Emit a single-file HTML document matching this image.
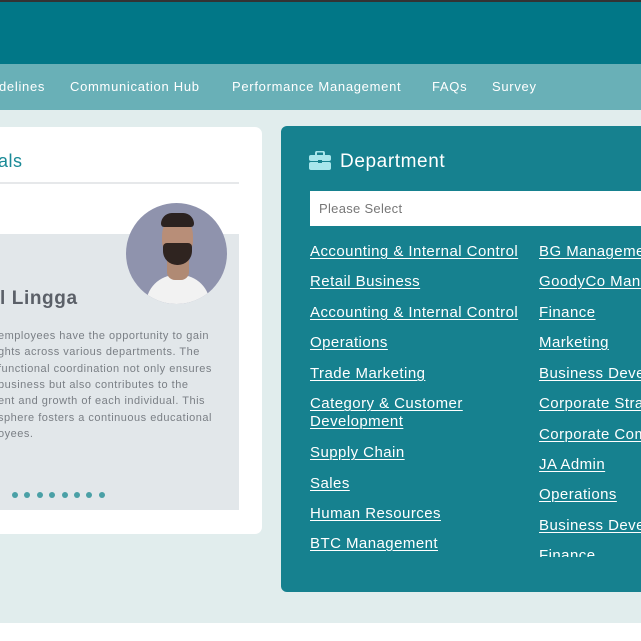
<!DOCTYPE html>
<html><head><meta charset="utf-8"><style>
*{margin:0;padding:0;box-sizing:border-box}
body{width:641px;height:641px;overflow:hidden;background:#fff;font-family:"Liberation Sans",sans-serif;position:relative}
.a{position:absolute;white-space:nowrap}
.nav{color:#fff;font-size:13px;letter-spacing:.7px;top:79px}
.l{position:absolute;color:#fff;font-size:15px;text-decoration:underline;text-decoration-thickness:1px;text-underline-offset:2px;white-space:nowrap;letter-spacing:.45px}
.p{position:absolute;left:-2px;font-size:11px;color:#7a7f85;letter-spacing:.5px;white-space:nowrap}
</style></head><body>
<div class="a" style="left:0;top:0;width:641px;height:623px;background:#e1eded"></div>
<div class="a" style="left:0;top:0;width:641px;height:2px;background:#333"></div>
<div class="a" style="left:0;top:2px;width:641px;height:62px;background:#017787"></div>
<div class="a" style="left:0;top:64px;width:641px;height:46px;background:#69b0b7"></div>
<div class="a nav" style="left:-1px">delines</div>
<div class="a nav" style="left:70px">Communication Hub</div>
<div class="a nav" style="left:232px">Performance Management</div>
<div class="a nav" style="left:432px">FAQs</div>
<div class="a nav" style="left:492px">Survey</div>

<div class="a" style="left:-10px;top:127px;width:272px;height:407px;background:#fff;border-radius:7px"></div>
<div class="a" style="left:-2px;top:151px;font-size:18px;color:#1a8a97;letter-spacing:.5px">als</div>
<div class="a" style="left:0;top:182px;width:239px;height:2px;background:#e6e8ea"></div>
<div class="a" style="left:0;top:234px;width:239px;height:276px;background:#e2e7ea"></div>
<div class="a" style="left:126px;top:203px;width:101px;height:101px;border-radius:50%;background:#8f93ad;overflow:hidden">
 <div class="a" style="left:20px;top:72px;width:64px;height:40px;border-radius:30px 30px 0 0;background:#f2f2f2"></div>
 <div class="a" style="left:41px;top:45px;width:22px;height:32px;background:#b08a74;border-radius:8px"></div>
 <div class="a" style="left:36px;top:14px;width:31px;height:42px;border-radius:45%;background:#b88e78"></div>
 <div class="a" style="left:35px;top:10px;width:33px;height:14px;border-radius:14px 14px 4px 4px;background:#2b2220"></div>
 <div class="a" style="left:37px;top:40px;width:29px;height:22px;border-radius:4px 4px 14px 14px;background:#2f2420"></div>
</div>
<div class="a" style="left:0px;top:288px;font-size:19px;font-weight:bold;color:#5b6068;letter-spacing:.6px">l Lingga</div>
<div class="p" style="top:330px">employees have the opportunity to gain</div>
<div class="p" style="top:346px">ghts across various departments. The</div>
<div class="p" style="top:363px">functional coordination not only ensures</div>
<div class="p" style="top:379px">business but also contributes to the</div>
<div class="p" style="top:395px">ent and growth of each individual. This</div>
<div class="p" style="top:412px">sphere fosters a continuous educational</div>
<div class="p" style="top:428px">oyees.</div>
<div class="a" style="left:12px;top:492px;font-size:0">
 <span style="display:inline-block;width:6px;height:6px;border-radius:50%;background:#4aa0a6;margin-right:6.4px"></span><span style="display:inline-block;width:6px;height:6px;border-radius:50%;background:#4aa0a6;margin-right:6.4px"></span><span style="display:inline-block;width:6px;height:6px;border-radius:50%;background:#4aa0a6;margin-right:6.4px"></span><span style="display:inline-block;width:6px;height:6px;border-radius:50%;background:#4aa0a6;margin-right:6.4px"></span><span style="display:inline-block;width:6px;height:6px;border-radius:50%;background:#4aa0a6;margin-right:6.4px"></span><span style="display:inline-block;width:6px;height:6px;border-radius:50%;background:#4aa0a6;margin-right:6.4px"></span><span style="display:inline-block;width:6px;height:6px;border-radius:50%;background:#4aa0a6;margin-right:6.4px"></span><span style="display:inline-block;width:6px;height:6px;border-radius:50%;background:#4aa0a6"></span>
</div>

<div class="a" style="left:281px;top:126px;width:380px;height:466px;background:#16818f;border-radius:6px"></div>
<svg class="a" style="left:309px;top:151px" width="22" height="19" viewBox="0 0 22 19">
 <path d="M7 4V2a1.5 1.5 0 0 1 1.5-1.5h5A1.5 1.5 0 0 1 15 2v2" fill="none" stroke="#a8e6ec" stroke-width="2"/>
 <rect x="0" y="4" width="22" height="6" rx="2" fill="#a8e6ec"/>
 <rect x="0" y="11" width="22" height="8" rx="2" fill="#a8e6ec"/>
 <rect x="9" y="9" width="4" height="3" fill="#16818f"/>
</svg>
<div class="a" style="left:340px;top:151px;font-size:19px;color:#fff;letter-spacing:.6px">Department</div>
<div class="a" style="left:310px;top:191px;width:340px;height:35px;background:#fff"></div>
<div class="a" style="left:319px;top:201px;font-size:13px;color:#777;letter-spacing:.3px">Please Select</div>
<div style="position:absolute;left:0;top:0;width:641px;height:557px;overflow:hidden">
<div class="l" style="left:310px;top:243px">Accounting &amp; Internal Control</div>
<div class="l" style="left:310px;top:273px">Retail Business</div>
<div class="l" style="left:310px;top:304px">Accounting &amp; Internal Control</div>
<div class="l" style="left:310px;top:334px">Operations</div>
<div class="l" style="left:310px;top:365px">Trade Marketing</div>
<div class="l" style="left:310px;top:395px">Category &amp; Customer</div>
<div class="l" style="left:310px;top:413px">Development</div>
<div class="l" style="left:310px;top:444px">Supply Chain</div>
<div class="l" style="left:310px;top:475px">Sales</div>
<div class="l" style="left:310px;top:505px">Human Resources</div>
<div class="l" style="left:310px;top:535px">BTC Management</div>
<div class="l" style="left:539px;top:243px">BG Management</div>
<div class="l" style="left:539px;top:273px">GoodyCo Management</div>
<div class="l" style="left:539px;top:304px">Finance</div>
<div class="l" style="left:539px;top:334px">Marketing</div>
<div class="l" style="left:539px;top:365px">Business Development</div>
<div class="l" style="left:539px;top:395px">Corporate Strategy</div>
<div class="l" style="left:539px;top:426px">Corporate Communication</div>
<div class="l" style="left:539px;top:456px">JA Admin</div>
<div class="l" style="left:539px;top:486px">Operations</div>
<div class="l" style="left:539px;top:517px">Business Development</div>
<div class="l" style="left:539px;top:547px">Finance</div>
</div>
</body></html>
